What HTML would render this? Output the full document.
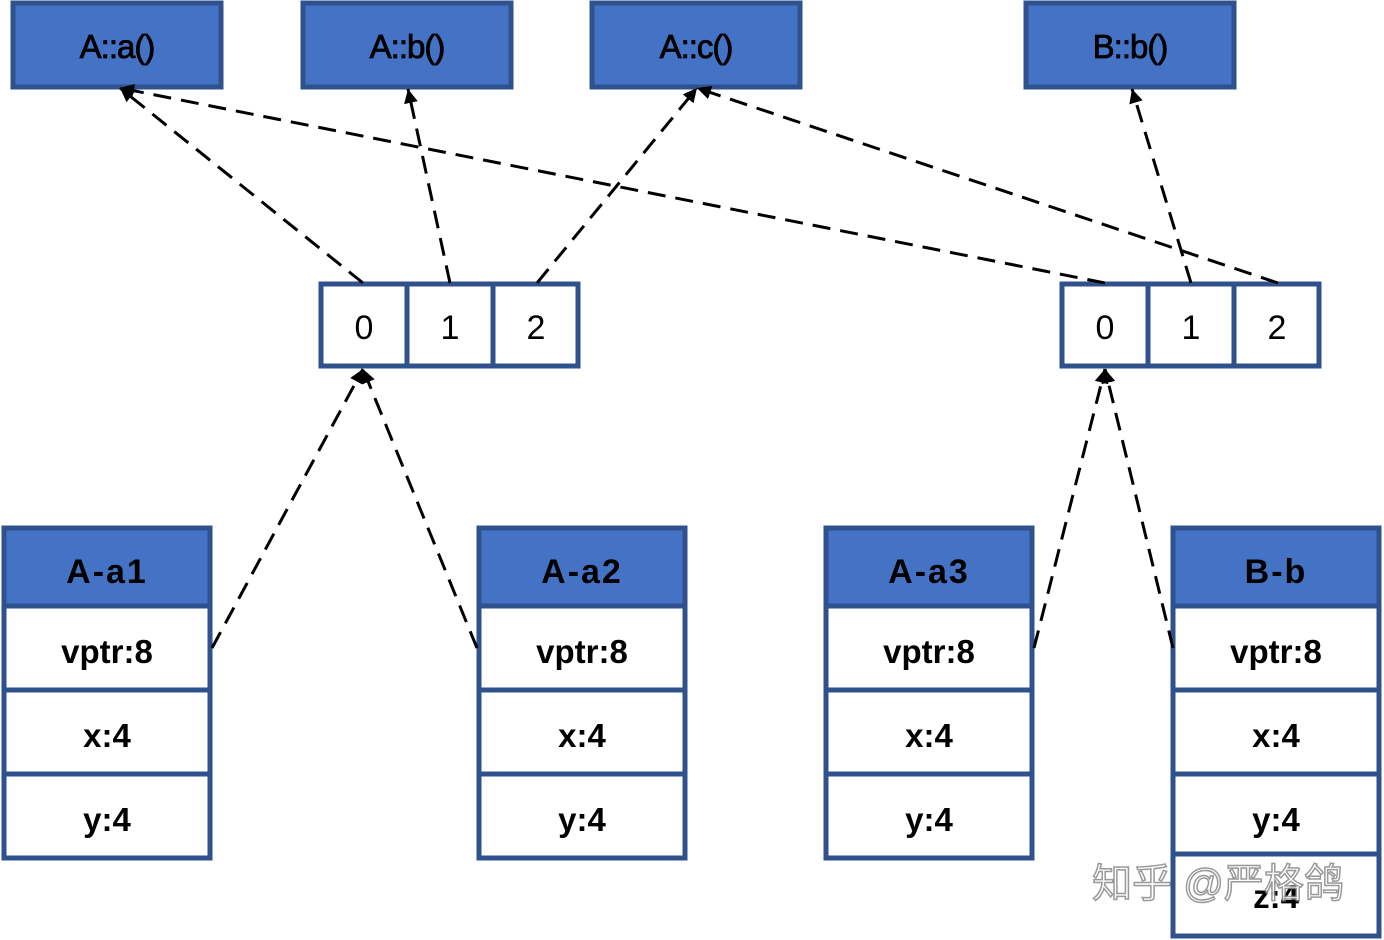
<!DOCTYPE html>
<html><head><meta charset="utf-8"><style>
html,body{margin:0;padding:0;background:#fff;width:1384px;height:940px;overflow:hidden}
svg{display:block}
.t{font-family:"Liberation Sans",sans-serif;fill:#000;text-anchor:middle}
</style></head><body>
<svg width="1384" height="940" viewBox="0 0 1384 940">
<defs>
<marker id="a" viewBox="0 0 10 10" refX="10" refY="5" markerWidth="14" markerHeight="14" orient="auto" markerUnits="userSpaceOnUse"><path d="M0,0 L10,5 L0,10 z" fill="#000"/></marker></defs>
<g fill="#4472c4" stroke="#2f528f" stroke-width="5">
<rect x="13" y="3" width="208" height="84"/>
<rect x="303" y="3" width="208" height="84"/>
<rect x="592" y="3" width="208" height="84"/>
<rect x="1026" y="3" width="208" height="84"/>
<rect x="4" y="528" width="206" height="78"/>
<rect x="479" y="528" width="206" height="78"/>
<rect x="826" y="528" width="206" height="78"/>
<rect x="1173" y="528" width="206" height="78"/>
</g>
<g fill="#fff" stroke="#2f528f" stroke-width="5">
<rect x="321" y="284" width="86" height="82"/><rect x="407" y="284" width="86" height="82"/><rect x="493" y="284" width="85" height="82"/>
<rect x="1062" y="284" width="86" height="82"/><rect x="1148" y="284" width="86" height="82"/><rect x="1234" y="284" width="85" height="82"/>
<rect x="4" y="606" width="206" height="84"/><rect x="4" y="690" width="206" height="84"/><rect x="4" y="774" width="206" height="84"/>
<rect x="479" y="606" width="206" height="84"/><rect x="479" y="690" width="206" height="84"/><rect x="479" y="774" width="206" height="84"/>
<rect x="826" y="606" width="206" height="84"/><rect x="826" y="690" width="206" height="84"/><rect x="826" y="774" width="206" height="84"/>
<rect x="1173" y="606" width="206" height="84"/><rect x="1173" y="690" width="206" height="84"/><rect x="1173" y="774" width="206" height="80"/><rect x="1173" y="854" width="206" height="82"/>
</g>
<g stroke="#000" stroke-width="3" stroke-dasharray="18,10" fill="none" marker-end="url(#a)">
<line x1="363" y1="283" x2="120" y2="88"/>
<line x1="450" y1="283" x2="408" y2="89"/>
<line x1="537" y1="283" x2="697" y2="88"/>
<line x1="1105" y1="283" x2="120" y2="88"/>
<line x1="1191" y1="283" x2="1132" y2="89"/>
<line x1="1278" y1="283" x2="697" y2="88"/>
<line x1="212" y1="648" x2="363" y2="369"/>
<line x1="477" y1="648" x2="363" y2="369"/>
<line x1="1034" y1="648" x2="1105" y2="369"/>
<line x1="1173" y1="648" x2="1105" y2="369"/>
</g>
<g class="t" font-size="33" stroke="#000" stroke-width="0.8" letter-spacing="-1">
<text x="117" y="58">A::a()</text><text x="407" y="58">A::b()</text><text x="696" y="58">A::c()</text><text x="1130" y="58">B::b()</text>
</g>
<g class="t" font-size="34" font-weight="300" fill="#222">
<text x="364" y="339">0</text><text x="450" y="339">1</text><text x="536" y="339">2</text>
<text x="1105" y="339">0</text><text x="1191" y="339">1</text><text x="1277" y="339">2</text>
</g>
<g class="t" font-size="34" font-weight="bold" letter-spacing="2">
<text x="107" y="583">A-a1</text><text x="582" y="583">A-a2</text><text x="929" y="583">A-a3</text><text x="1276" y="583">B-b</text>
</g>
<g class="t" font-size="33" font-weight="bold">
<text x="107" y="663">vptr:8</text><text x="107" y="747">x:4</text><text x="107" y="831">y:4</text>
<text x="582" y="663">vptr:8</text><text x="582" y="747">x:4</text><text x="582" y="831">y:4</text>
<text x="929" y="663">vptr:8</text><text x="929" y="747">x:4</text><text x="929" y="831">y:4</text>
<text x="1276" y="663">vptr:8</text><text x="1276" y="747">x:4</text><text x="1276" y="831">y:4</text><text x="1276" y="908">z:4</text>
</g>
<text x="1218" y="897" font-family="'Liberation Sans','Noto Sans CJK SC',sans-serif" font-size="40" fill="#fff" stroke="#888" stroke-width="1.5" text-anchor="middle" opacity="0.85">知乎 @严格鸽</text>
</svg>
</body></html>
